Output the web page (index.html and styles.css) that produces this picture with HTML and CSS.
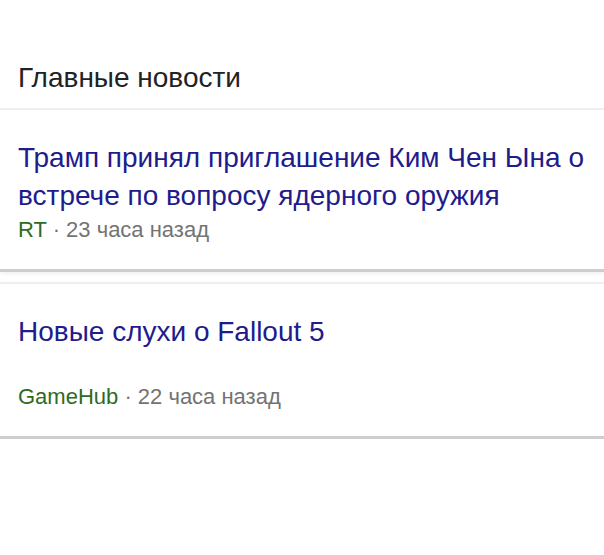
FILE: index.html
```html
<!DOCTYPE html>
<html lang="ru">
<head>
<meta charset="utf-8">
<title>Главные новости</title>
<link rel="stylesheet" href="styles.css">
</head>
<body>
<div class="page">
  <h2 class="section-title">Главные новости</h2>
  <div class="cards">
    <a class="card" href="#">
      <div class="card-title">Трамп принял приглашение Ким Чен Ына о встрече по вопросу ядерного оружия</div>
      <div class="card-meta"><span class="source">RT</span> · 23 часа назад</div>
    </a>
    <a class="card" href="#">
      <div class="card-title">Новые слухи о Fallout 5</div>
      <div class="card-meta"><span class="source">GameHub</span> · 22 часа назад</div>
    </a>
  </div>
</div>
</body>
</html>
```

FILE: styles.css
```css
html, body {
  margin: 0;
  padding: 0;
  background: #ffffff;
}

body {
  font-family: "Liberation Sans", Arial, sans-serif;
}

.page {
  width: 604px;
}

.section-title {
  margin: 0;
  padding: 60px 18px 12px 18px;
  font-size: 28px;
  font-weight: normal;
  line-height: 36px;
  color: #222222;
}

.cards {
  display: flex;
  flex-direction: column;
  gap: 10px;
}

.card {
  display: flex;
  flex-direction: column;
  text-decoration: none;
  background: #ffffff;
  border-top: 2px solid #efefef;
  border-bottom: 3px solid #cdcdcd;
  box-shadow: 0 2px 4px rgba(0, 0, 0, 0.06);
  padding: 29px 18px 26px 18px;
}

.card-title {
  font-size: 28px;
  line-height: 38px;
  min-height: 69px;
  color: #211b8c;
}

.card-meta {
  margin-top: 2px;
  font-size: 22px;
  line-height: 26px;
  color: #737373;
}

.source {
  color: #2f6b1e;
}
```
